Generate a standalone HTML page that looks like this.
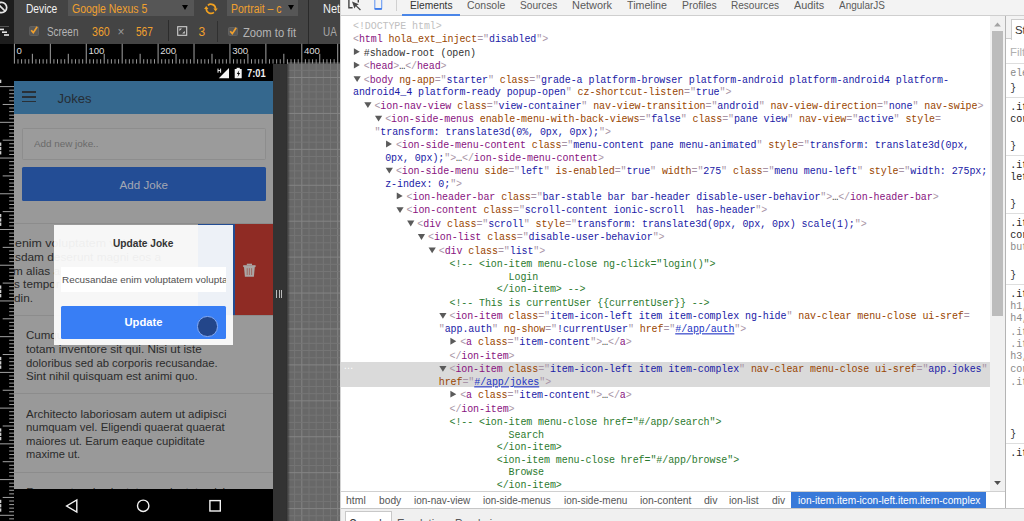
<!DOCTYPE html><html><head><meta charset="utf-8"><title>DevTools</title><style>
*{box-sizing:border-box;margin:0;padding:0}
html,body{width:1024px;height:521px;overflow:hidden;background:#fff}
body{position:relative;font-family:"Liberation Sans",sans-serif;}
.abs{position:absolute}
.t{position:absolute;white-space:pre;line-height:1}
/* left emulation panel */
#left{position:absolute;left:0;top:0;width:339.5px;height:521px;background:#000;overflow:hidden}
#tb{position:absolute;left:0;top:0;width:340px;height:43.5px;background:#444}
#tbl{position:absolute;left:0;top:0;width:14.3px;height:43.5px;background:#1d1d1d}
.sel{position:absolute;background:#565656}
.or{color:#f0a02e !important}
.tbt{position:absolute;white-space:pre;font-size:12px;line-height:14px;color:#dcdcdc}
/* device */
#dev{position:absolute;left:14.4px;top:63.6px;width:259px;height:458px;background:#999;overflow:hidden}
.dt{position:absolute;white-space:pre;font-size:11.5px;line-height:13.65px;color:#2b2b2b}
/* devtools */
#dt{position:absolute;left:339.5px;top:0;width:685px;height:521px;background:#fff;overflow:hidden}
.ln{position:absolute;white-space:pre;font-family:"Liberation Mono",monospace;font-size:10px;line-height:12px;height:12px;letter-spacing:-0.091px;color:#333;transform:scaleY(1.1);transform-origin:0 50%}
.tg{color:#881280}.an{color:#994500}.av{color:#1a1aa6}.p{color:#a894a6}.cm{color:#2b7a2e}.dc{color:#c0c0c0}
.ar{position:absolute;width:0;height:0}
.tab{position:absolute;white-space:pre;font-size:11.6px;line-height:14px;color:#5a5a5a}
.bc{position:absolute;white-space:pre;font-size:11.5px;line-height:14px;color:#555}
.st{position:absolute;white-space:pre;font-family:"Liberation Mono",monospace;font-size:10px;line-height:12px;left:1010.3px;letter-spacing:-0.091px;transform:scaleY(1.1);transform-origin:0 50%}
</style></head><body>
<div id="left">
<div class="abs" style="left:286px;top:63.6px;width:54px;height:458px;background:#686868"></div>
<svg class="abs" style="left:0;top:0" width="340" height="521"><line x1="287.43" y1="63.6" x2="287.43" y2="521" stroke="#757575" stroke-width="1"/><line x1="294.62" y1="63.6" x2="294.62" y2="521" stroke="#757575" stroke-width="1"/><line x1="301.80" y1="63.6" x2="301.80" y2="521" stroke="#848484" stroke-width="1"/><line x1="308.99" y1="63.6" x2="308.99" y2="521" stroke="#757575" stroke-width="1"/><line x1="316.17" y1="63.6" x2="316.17" y2="521" stroke="#757575" stroke-width="1"/><line x1="323.35" y1="63.6" x2="323.35" y2="521" stroke="#757575" stroke-width="1"/><line x1="330.54" y1="63.6" x2="330.54" y2="521" stroke="#757575" stroke-width="1"/><line x1="337.72" y1="63.6" x2="337.72" y2="521" stroke="#848484" stroke-width="1"/><line x1="287" y1="63.13" x2="340" y2="63.13" stroke="#757575" stroke-width="1"/><line x1="287" y1="70.31" x2="340" y2="70.31" stroke="#757575" stroke-width="1"/><line x1="287" y1="77.50" x2="340" y2="77.50" stroke="#848484" stroke-width="1"/><line x1="287" y1="84.69" x2="340" y2="84.69" stroke="#757575" stroke-width="1"/><line x1="287" y1="91.87" x2="340" y2="91.87" stroke="#757575" stroke-width="1"/><line x1="287" y1="99.06" x2="340" y2="99.06" stroke="#757575" stroke-width="1"/><line x1="287" y1="106.24" x2="340" y2="106.24" stroke="#757575" stroke-width="1"/><line x1="287" y1="113.43" x2="340" y2="113.43" stroke="#848484" stroke-width="1"/><line x1="287" y1="120.61" x2="340" y2="120.61" stroke="#757575" stroke-width="1"/><line x1="287" y1="127.80" x2="340" y2="127.80" stroke="#757575" stroke-width="1"/><line x1="287" y1="134.98" x2="340" y2="134.98" stroke="#757575" stroke-width="1"/><line x1="287" y1="142.16" x2="340" y2="142.16" stroke="#757575" stroke-width="1"/><line x1="287" y1="149.35" x2="340" y2="149.35" stroke="#848484" stroke-width="1"/><line x1="287" y1="156.53" x2="340" y2="156.53" stroke="#757575" stroke-width="1"/><line x1="287" y1="163.72" x2="340" y2="163.72" stroke="#757575" stroke-width="1"/><line x1="287" y1="170.91" x2="340" y2="170.91" stroke="#757575" stroke-width="1"/><line x1="287" y1="178.09" x2="340" y2="178.09" stroke="#757575" stroke-width="1"/><line x1="287" y1="185.28" x2="340" y2="185.28" stroke="#848484" stroke-width="1"/><line x1="287" y1="192.46" x2="340" y2="192.46" stroke="#757575" stroke-width="1"/><line x1="287" y1="199.65" x2="340" y2="199.65" stroke="#757575" stroke-width="1"/><line x1="287" y1="206.83" x2="340" y2="206.83" stroke="#757575" stroke-width="1"/><line x1="287" y1="214.02" x2="340" y2="214.02" stroke="#757575" stroke-width="1"/><line x1="287" y1="221.20" x2="340" y2="221.20" stroke="#848484" stroke-width="1"/><line x1="287" y1="228.38" x2="340" y2="228.38" stroke="#757575" stroke-width="1"/><line x1="287" y1="235.57" x2="340" y2="235.57" stroke="#757575" stroke-width="1"/><line x1="287" y1="242.75" x2="340" y2="242.75" stroke="#757575" stroke-width="1"/><line x1="287" y1="249.94" x2="340" y2="249.94" stroke="#757575" stroke-width="1"/><line x1="287" y1="257.12" x2="340" y2="257.12" stroke="#848484" stroke-width="1"/><line x1="287" y1="264.31" x2="340" y2="264.31" stroke="#757575" stroke-width="1"/><line x1="287" y1="271.50" x2="340" y2="271.50" stroke="#757575" stroke-width="1"/><line x1="287" y1="278.68" x2="340" y2="278.68" stroke="#757575" stroke-width="1"/><line x1="287" y1="285.87" x2="340" y2="285.87" stroke="#757575" stroke-width="1"/><line x1="287" y1="293.05" x2="340" y2="293.05" stroke="#848484" stroke-width="1"/><line x1="287" y1="300.24" x2="340" y2="300.24" stroke="#757575" stroke-width="1"/><line x1="287" y1="307.42" x2="340" y2="307.42" stroke="#757575" stroke-width="1"/><line x1="287" y1="314.61" x2="340" y2="314.61" stroke="#757575" stroke-width="1"/><line x1="287" y1="321.79" x2="340" y2="321.79" stroke="#757575" stroke-width="1"/><line x1="287" y1="328.98" x2="340" y2="328.98" stroke="#848484" stroke-width="1"/><line x1="287" y1="336.16" x2="340" y2="336.16" stroke="#757575" stroke-width="1"/><line x1="287" y1="343.35" x2="340" y2="343.35" stroke="#757575" stroke-width="1"/><line x1="287" y1="350.53" x2="340" y2="350.53" stroke="#757575" stroke-width="1"/><line x1="287" y1="357.72" x2="340" y2="357.72" stroke="#757575" stroke-width="1"/><line x1="287" y1="364.90" x2="340" y2="364.90" stroke="#848484" stroke-width="1"/><line x1="287" y1="372.08" x2="340" y2="372.08" stroke="#757575" stroke-width="1"/><line x1="287" y1="379.27" x2="340" y2="379.27" stroke="#757575" stroke-width="1"/><line x1="287" y1="386.45" x2="340" y2="386.45" stroke="#757575" stroke-width="1"/><line x1="287" y1="393.64" x2="340" y2="393.64" stroke="#757575" stroke-width="1"/><line x1="287" y1="400.82" x2="340" y2="400.82" stroke="#848484" stroke-width="1"/><line x1="287" y1="408.01" x2="340" y2="408.01" stroke="#757575" stroke-width="1"/><line x1="287" y1="415.19" x2="340" y2="415.19" stroke="#757575" stroke-width="1"/><line x1="287" y1="422.38" x2="340" y2="422.38" stroke="#757575" stroke-width="1"/><line x1="287" y1="429.56" x2="340" y2="429.56" stroke="#757575" stroke-width="1"/><line x1="287" y1="436.75" x2="340" y2="436.75" stroke="#848484" stroke-width="1"/><line x1="287" y1="443.94" x2="340" y2="443.94" stroke="#757575" stroke-width="1"/><line x1="287" y1="451.12" x2="340" y2="451.12" stroke="#757575" stroke-width="1"/><line x1="287" y1="458.31" x2="340" y2="458.31" stroke="#757575" stroke-width="1"/><line x1="287" y1="465.49" x2="340" y2="465.49" stroke="#757575" stroke-width="1"/><line x1="287" y1="472.68" x2="340" y2="472.68" stroke="#848484" stroke-width="1"/><line x1="287" y1="479.86" x2="340" y2="479.86" stroke="#757575" stroke-width="1"/><line x1="287" y1="487.05" x2="340" y2="487.05" stroke="#757575" stroke-width="1"/><line x1="287" y1="494.23" x2="340" y2="494.23" stroke="#757575" stroke-width="1"/><line x1="287" y1="501.42" x2="340" y2="501.42" stroke="#757575" stroke-width="1"/><line x1="287" y1="508.60" x2="340" y2="508.60" stroke="#848484" stroke-width="1"/><line x1="287" y1="515.79" x2="340" y2="515.79" stroke="#757575" stroke-width="1"/></svg>
<div class="abs" style="left:273px;top:63.6px;width:12.5px;height:458px;background:#333"></div>
<div class="abs" style="left:285.5px;top:63.6px;width:4.5px;height:458px;background:linear-gradient(to right,#2a2a2a 0,rgba(42,42,42,0.75) 30%,rgba(42,42,42,0) 100%)"></div>
<div class="abs" style="left:276.3px;top:289.5px;width:1.1px;height:8px;background:#bbb"></div>
<div class="abs" style="left:278.7px;top:289.5px;width:1.1px;height:8px;background:#bbb"></div>
<div class="abs" style="left:281.1px;top:289.5px;width:1.1px;height:8px;background:#bbb"></div>
<div id="tb"></div><div id="tbl"></div>
<svg class="abs" style="left:0;top:0" width="15" height="44"><circle cx="1.5" cy="7.5" r="5.2" fill="none" stroke="#e6e6e6" stroke-width="1.7"/><line x1="-2" y1="4" x2="5.5" y2="11.5" stroke="#e6e6e6" stroke-width="1.7"/><rect x="0" y="26" width="9" height="1" fill="#555"/><rect x="0" y="28.6" width="4" height="1.6" fill="#e6e6e6"/><rect x="2" y="31.4" width="5" height="1.6" fill="#e6e6e6"/><rect x="4" y="34.2" width="5" height="1.6" fill="#e6e6e6"/></svg>
<div class="tbt" style="left:26.4px;top:1.8px;transform-origin:0 0;transform:scaleX(0.8504);color:#f2f2f2;">Device</div>
<div class="sel" style="left:68px;top:0;width:126.3px;height:15.8px"></div>
<div class="tbt or" style="left:72.1px;top:1.8px;transform-origin:0 0;transform:scaleX(0.8749);">Google Nexus 5</div>
<div class="ar" style="left:181.8px;top:5.2px;border-left:3.3px solid transparent;border-right:3.3px solid transparent;border-top:5.5px solid #000"></div>
<svg class="abs" style="left:200px;top:0" width="22" height="18"><g transform="translate(-200,0)"><path d="M207.9 5.3 A4.6 4.6 0 0 1 215.5 8.8" fill="none" stroke="#f0a020" stroke-width="1.7"/><path d="M213.9 12.3 A4.6 4.6 0 0 1 206.3 8.8" fill="none" stroke="#f0a020" stroke-width="1.7"/><path d="M213.4 8.5 L217.7 8.5 L215.6 11.5 Z" fill="#f0a020"/><path d="M204.1 9.1 L208.4 9.1 L206.2 6.1 Z" fill="#f0a020"/></g></svg>
<div class="sel" style="left:226.8px;top:0;width:71px;height:15.8px"></div>
<div class="tbt or" style="left:231.4px;top:1.8px;transform-origin:0 0;transform:scaleX(0.8702);">Portrait – c</div>
<div class="ar" style="left:288.2px;top:5.2px;border-left:3.3px solid transparent;border-right:3.3px solid transparent;border-top:5.5px solid #000"></div>
<div class="abs" style="left:308px;top:0;width:1.2px;height:43.5px;background:#2a2a2a"></div>
<div class="tbt" style="left:322.8px;top:1.8px;transform-origin:0 0;transform:scaleX(0.9204);color:#f2f2f2;">Net</div>
<div class="tbt" style="left:322.8px;top:24.5px;transform-origin:0 0;transform:scaleX(0.8277);color:#a8a8a8;">UA</div>
<div class="abs" style="left:29px;top:26.3px;width:9.6px;height:9.6px;background:#585858;border:1px solid #606060;border-radius:1.5px"></div>
<svg class="abs" style="left:29px;top:25.3px" width="11" height="11"><path d="M2.2 5.2 L4.3 7.6 L8.2 1.8" fill="none" stroke="#f0a02e" stroke-width="1.7"/></svg>
<div class="tbt" style="left:46.7px;top:24.5px;transform-origin:0 0;transform:scaleX(0.8256);color:#b4b4b4;">Screen</div>
<div class="tbt or" style="left:91.5px;top:24.5px;transform-origin:0 0;transform:scaleX(0.8886);">360</div>
<div class="tbt" style="left:117.5px;top:24.5px;color:#999">×</div>
<div class="tbt or" style="left:136px;top:24.5px;transform-origin:0 0;transform:scaleX(0.8387);">567</div>
<div class="abs" style="left:167.8px;top:20px;width:1px;height:21px;background:#2c2c2c"></div>
<svg class="abs" style="left:177px;top:25.5px" width="11" height="11"><rect x="0.7" y="0.7" width="9" height="8.6" fill="none" stroke="#d0d0d0" stroke-width="1.1"/><path d="M2.4 2.4 L5 2.4 L2.4 5 Z M7.8 7.6 L5.2 7.6 L7.8 5 Z" fill="#d0d0d0"/></svg>
<div class="tbt or" style="left:198.6px;top:24.5px">3</div>
<div class="abs" style="left:216.8px;top:20.5px;width:1px;height:21px;background:#303030"></div>
<div class="abs" style="left:228px;top:26.8px;width:9.6px;height:9.6px;background:#585858;border:1px solid #606060;border-radius:1.5px"></div>
<svg class="abs" style="left:228px;top:25.8px" width="11" height="11"><path d="M2.2 5.2 L4.3 7.6 L8.2 1.8" fill="none" stroke="#f0a02e" stroke-width="1.7"/></svg>
<div class="tbt" style="left:243px;top:26px;transform-origin:0 0;transform:scaleX(0.9350);color:#b4b4b4;">Zoom to fit</div>
<svg class="abs" style="left:0;top:0" width="340" height="521" shape-rendering="auto"><line x1="14.40" y1="43.8" x2="14.40" y2="63.6" stroke="#b4b4b4" stroke-width="0.9"/><line x1="17.99" y1="59.2" x2="17.99" y2="63.6" stroke="#a8a8a8" stroke-width="0.9"/><line x1="21.59" y1="59.2" x2="21.59" y2="63.6" stroke="#a8a8a8" stroke-width="0.9"/><line x1="25.18" y1="59.2" x2="25.18" y2="63.6" stroke="#a8a8a8" stroke-width="0.9"/><line x1="28.77" y1="59.2" x2="28.77" y2="63.6" stroke="#a8a8a8" stroke-width="0.9"/><line x1="32.36" y1="53.8" x2="32.36" y2="63.6" stroke="#b4b4b4" stroke-width="0.9"/><line x1="35.95" y1="59.2" x2="35.95" y2="63.6" stroke="#a8a8a8" stroke-width="0.9"/><line x1="39.55" y1="59.2" x2="39.55" y2="63.6" stroke="#a8a8a8" stroke-width="0.9"/><line x1="43.14" y1="59.2" x2="43.14" y2="63.6" stroke="#a8a8a8" stroke-width="0.9"/><line x1="46.73" y1="59.2" x2="46.73" y2="63.6" stroke="#a8a8a8" stroke-width="0.9"/><line x1="50.33" y1="43.8" x2="50.33" y2="63.6" stroke="#b4b4b4" stroke-width="0.9"/><line x1="53.92" y1="59.2" x2="53.92" y2="63.6" stroke="#a8a8a8" stroke-width="0.9"/><line x1="57.51" y1="59.2" x2="57.51" y2="63.6" stroke="#a8a8a8" stroke-width="0.9"/><line x1="61.10" y1="59.2" x2="61.10" y2="63.6" stroke="#a8a8a8" stroke-width="0.9"/><line x1="64.70" y1="59.2" x2="64.70" y2="63.6" stroke="#a8a8a8" stroke-width="0.9"/><line x1="68.29" y1="53.8" x2="68.29" y2="63.6" stroke="#b4b4b4" stroke-width="0.9"/><line x1="71.88" y1="59.2" x2="71.88" y2="63.6" stroke="#a8a8a8" stroke-width="0.9"/><line x1="75.47" y1="59.2" x2="75.47" y2="63.6" stroke="#a8a8a8" stroke-width="0.9"/><line x1="79.07" y1="59.2" x2="79.07" y2="63.6" stroke="#a8a8a8" stroke-width="0.9"/><line x1="82.66" y1="59.2" x2="82.66" y2="63.6" stroke="#a8a8a8" stroke-width="0.9"/><line x1="86.25" y1="43.8" x2="86.25" y2="63.6" stroke="#b4b4b4" stroke-width="0.9"/><line x1="89.84" y1="59.2" x2="89.84" y2="63.6" stroke="#a8a8a8" stroke-width="0.9"/><line x1="93.44" y1="59.2" x2="93.44" y2="63.6" stroke="#a8a8a8" stroke-width="0.9"/><line x1="97.03" y1="59.2" x2="97.03" y2="63.6" stroke="#a8a8a8" stroke-width="0.9"/><line x1="100.62" y1="59.2" x2="100.62" y2="63.6" stroke="#a8a8a8" stroke-width="0.9"/><line x1="104.21" y1="53.8" x2="104.21" y2="63.6" stroke="#b4b4b4" stroke-width="0.9"/><line x1="107.81" y1="59.2" x2="107.81" y2="63.6" stroke="#a8a8a8" stroke-width="0.9"/><line x1="111.40" y1="59.2" x2="111.40" y2="63.6" stroke="#a8a8a8" stroke-width="0.9"/><line x1="114.99" y1="59.2" x2="114.99" y2="63.6" stroke="#a8a8a8" stroke-width="0.9"/><line x1="118.58" y1="59.2" x2="118.58" y2="63.6" stroke="#a8a8a8" stroke-width="0.9"/><line x1="122.18" y1="43.8" x2="122.18" y2="63.6" stroke="#b4b4b4" stroke-width="0.9"/><line x1="125.77" y1="59.2" x2="125.77" y2="63.6" stroke="#a8a8a8" stroke-width="0.9"/><line x1="129.36" y1="59.2" x2="129.36" y2="63.6" stroke="#a8a8a8" stroke-width="0.9"/><line x1="132.95" y1="59.2" x2="132.95" y2="63.6" stroke="#a8a8a8" stroke-width="0.9"/><line x1="136.55" y1="59.2" x2="136.55" y2="63.6" stroke="#a8a8a8" stroke-width="0.9"/><line x1="140.14" y1="53.8" x2="140.14" y2="63.6" stroke="#b4b4b4" stroke-width="0.9"/><line x1="143.73" y1="59.2" x2="143.73" y2="63.6" stroke="#a8a8a8" stroke-width="0.9"/><line x1="147.32" y1="59.2" x2="147.32" y2="63.6" stroke="#a8a8a8" stroke-width="0.9"/><line x1="150.92" y1="59.2" x2="150.92" y2="63.6" stroke="#a8a8a8" stroke-width="0.9"/><line x1="154.51" y1="59.2" x2="154.51" y2="63.6" stroke="#a8a8a8" stroke-width="0.9"/><line x1="158.10" y1="43.8" x2="158.10" y2="63.6" stroke="#b4b4b4" stroke-width="0.9"/><line x1="161.69" y1="59.2" x2="161.69" y2="63.6" stroke="#a8a8a8" stroke-width="0.9"/><line x1="165.29" y1="59.2" x2="165.29" y2="63.6" stroke="#a8a8a8" stroke-width="0.9"/><line x1="168.88" y1="59.2" x2="168.88" y2="63.6" stroke="#a8a8a8" stroke-width="0.9"/><line x1="172.47" y1="59.2" x2="172.47" y2="63.6" stroke="#a8a8a8" stroke-width="0.9"/><line x1="176.06" y1="53.8" x2="176.06" y2="63.6" stroke="#b4b4b4" stroke-width="0.9"/><line x1="179.66" y1="59.2" x2="179.66" y2="63.6" stroke="#a8a8a8" stroke-width="0.9"/><line x1="183.25" y1="59.2" x2="183.25" y2="63.6" stroke="#a8a8a8" stroke-width="0.9"/><line x1="186.84" y1="59.2" x2="186.84" y2="63.6" stroke="#a8a8a8" stroke-width="0.9"/><line x1="190.43" y1="59.2" x2="190.43" y2="63.6" stroke="#a8a8a8" stroke-width="0.9"/><line x1="194.03" y1="43.8" x2="194.03" y2="63.6" stroke="#b4b4b4" stroke-width="0.9"/><line x1="197.62" y1="59.2" x2="197.62" y2="63.6" stroke="#a8a8a8" stroke-width="0.9"/><line x1="201.21" y1="59.2" x2="201.21" y2="63.6" stroke="#a8a8a8" stroke-width="0.9"/><line x1="204.80" y1="59.2" x2="204.80" y2="63.6" stroke="#a8a8a8" stroke-width="0.9"/><line x1="208.40" y1="59.2" x2="208.40" y2="63.6" stroke="#a8a8a8" stroke-width="0.9"/><line x1="211.99" y1="53.8" x2="211.99" y2="63.6" stroke="#b4b4b4" stroke-width="0.9"/><line x1="215.58" y1="59.2" x2="215.58" y2="63.6" stroke="#a8a8a8" stroke-width="0.9"/><line x1="219.17" y1="59.2" x2="219.17" y2="63.6" stroke="#a8a8a8" stroke-width="0.9"/><line x1="222.77" y1="59.2" x2="222.77" y2="63.6" stroke="#a8a8a8" stroke-width="0.9"/><line x1="226.36" y1="59.2" x2="226.36" y2="63.6" stroke="#a8a8a8" stroke-width="0.9"/><line x1="229.95" y1="43.8" x2="229.95" y2="63.6" stroke="#b4b4b4" stroke-width="0.9"/><line x1="233.54" y1="59.2" x2="233.54" y2="63.6" stroke="#a8a8a8" stroke-width="0.9"/><line x1="237.14" y1="59.2" x2="237.14" y2="63.6" stroke="#a8a8a8" stroke-width="0.9"/><line x1="240.73" y1="59.2" x2="240.73" y2="63.6" stroke="#a8a8a8" stroke-width="0.9"/><line x1="244.32" y1="59.2" x2="244.32" y2="63.6" stroke="#a8a8a8" stroke-width="0.9"/><line x1="247.91" y1="53.8" x2="247.91" y2="63.6" stroke="#b4b4b4" stroke-width="0.9"/><line x1="251.51" y1="59.2" x2="251.51" y2="63.6" stroke="#a8a8a8" stroke-width="0.9"/><line x1="255.10" y1="59.2" x2="255.10" y2="63.6" stroke="#a8a8a8" stroke-width="0.9"/><line x1="258.69" y1="59.2" x2="258.69" y2="63.6" stroke="#a8a8a8" stroke-width="0.9"/><line x1="262.28" y1="59.2" x2="262.28" y2="63.6" stroke="#a8a8a8" stroke-width="0.9"/><line x1="265.88" y1="43.8" x2="265.88" y2="63.6" stroke="#b4b4b4" stroke-width="0.9"/><line x1="269.47" y1="59.2" x2="269.47" y2="63.6" stroke="#a8a8a8" stroke-width="0.9"/><line x1="273.06" y1="59.2" x2="273.06" y2="63.6" stroke="#a8a8a8" stroke-width="0.9"/><line x1="276.65" y1="59.2" x2="276.65" y2="63.6" stroke="#a8a8a8" stroke-width="0.9"/><line x1="280.25" y1="59.2" x2="280.25" y2="63.6" stroke="#a8a8a8" stroke-width="0.9"/><line x1="283.84" y1="53.8" x2="283.84" y2="63.6" stroke="#b4b4b4" stroke-width="0.9"/><line x1="287.43" y1="59.2" x2="287.43" y2="63.6" stroke="#a8a8a8" stroke-width="0.9"/><line x1="291.02" y1="59.2" x2="291.02" y2="63.6" stroke="#a8a8a8" stroke-width="0.9"/><line x1="294.62" y1="59.2" x2="294.62" y2="63.6" stroke="#a8a8a8" stroke-width="0.9"/><line x1="298.21" y1="59.2" x2="298.21" y2="63.6" stroke="#a8a8a8" stroke-width="0.9"/><line x1="301.80" y1="43.8" x2="301.80" y2="63.6" stroke="#b4b4b4" stroke-width="0.9"/><line x1="305.39" y1="59.2" x2="305.39" y2="63.6" stroke="#a8a8a8" stroke-width="0.9"/><line x1="308.99" y1="59.2" x2="308.99" y2="63.6" stroke="#a8a8a8" stroke-width="0.9"/><line x1="312.58" y1="59.2" x2="312.58" y2="63.6" stroke="#a8a8a8" stroke-width="0.9"/><line x1="316.17" y1="59.2" x2="316.17" y2="63.6" stroke="#a8a8a8" stroke-width="0.9"/><line x1="319.76" y1="53.8" x2="319.76" y2="63.6" stroke="#b4b4b4" stroke-width="0.9"/><line x1="323.35" y1="59.2" x2="323.35" y2="63.6" stroke="#a8a8a8" stroke-width="0.9"/><line x1="326.95" y1="59.2" x2="326.95" y2="63.6" stroke="#a8a8a8" stroke-width="0.9"/><line x1="330.54" y1="59.2" x2="330.54" y2="63.6" stroke="#a8a8a8" stroke-width="0.9"/><line x1="334.13" y1="59.2" x2="334.13" y2="63.6" stroke="#a8a8a8" stroke-width="0.9"/><line x1="337.72" y1="43.8" x2="337.72" y2="63.6" stroke="#b4b4b4" stroke-width="0.9"/><line x1="0" y1="86.60" x2="14.3" y2="86.60" stroke="#b4b4b4" stroke-width="0.9"/><line x1="9.2" y1="90.17" x2="14.3" y2="90.17" stroke="#b4b4b4" stroke-width="0.9"/><line x1="9.2" y1="93.74" x2="14.3" y2="93.74" stroke="#b4b4b4" stroke-width="0.9"/><line x1="9.2" y1="97.32" x2="14.3" y2="97.32" stroke="#b4b4b4" stroke-width="0.9"/><line x1="9.2" y1="100.89" x2="14.3" y2="100.89" stroke="#b4b4b4" stroke-width="0.9"/><line x1="2.7" y1="104.46" x2="14.3" y2="104.46" stroke="#b4b4b4" stroke-width="0.9"/><line x1="9.2" y1="108.03" x2="14.3" y2="108.03" stroke="#b4b4b4" stroke-width="0.9"/><line x1="9.2" y1="111.61" x2="14.3" y2="111.61" stroke="#b4b4b4" stroke-width="0.9"/><line x1="9.2" y1="115.18" x2="14.3" y2="115.18" stroke="#b4b4b4" stroke-width="0.9"/><line x1="9.2" y1="118.75" x2="14.3" y2="118.75" stroke="#b4b4b4" stroke-width="0.9"/><line x1="0" y1="122.32" x2="14.3" y2="122.32" stroke="#b4b4b4" stroke-width="0.9"/><line x1="9.2" y1="125.90" x2="14.3" y2="125.90" stroke="#b4b4b4" stroke-width="0.9"/><line x1="9.2" y1="129.47" x2="14.3" y2="129.47" stroke="#b4b4b4" stroke-width="0.9"/><line x1="9.2" y1="133.04" x2="14.3" y2="133.04" stroke="#b4b4b4" stroke-width="0.9"/><line x1="9.2" y1="136.62" x2="14.3" y2="136.62" stroke="#b4b4b4" stroke-width="0.9"/><line x1="2.7" y1="140.19" x2="14.3" y2="140.19" stroke="#b4b4b4" stroke-width="0.9"/><line x1="9.2" y1="143.76" x2="14.3" y2="143.76" stroke="#b4b4b4" stroke-width="0.9"/><line x1="9.2" y1="147.33" x2="14.3" y2="147.33" stroke="#b4b4b4" stroke-width="0.9"/><line x1="9.2" y1="150.91" x2="14.3" y2="150.91" stroke="#b4b4b4" stroke-width="0.9"/><line x1="9.2" y1="154.48" x2="14.3" y2="154.48" stroke="#b4b4b4" stroke-width="0.9"/><line x1="0" y1="158.05" x2="14.3" y2="158.05" stroke="#b4b4b4" stroke-width="0.9"/><line x1="9.2" y1="161.62" x2="14.3" y2="161.62" stroke="#b4b4b4" stroke-width="0.9"/><line x1="9.2" y1="165.19" x2="14.3" y2="165.19" stroke="#b4b4b4" stroke-width="0.9"/><line x1="9.2" y1="168.77" x2="14.3" y2="168.77" stroke="#b4b4b4" stroke-width="0.9"/><line x1="9.2" y1="172.34" x2="14.3" y2="172.34" stroke="#b4b4b4" stroke-width="0.9"/><line x1="2.7" y1="175.91" x2="14.3" y2="175.91" stroke="#b4b4b4" stroke-width="0.9"/><line x1="9.2" y1="179.49" x2="14.3" y2="179.49" stroke="#b4b4b4" stroke-width="0.9"/><line x1="9.2" y1="183.06" x2="14.3" y2="183.06" stroke="#b4b4b4" stroke-width="0.9"/><line x1="9.2" y1="186.63" x2="14.3" y2="186.63" stroke="#b4b4b4" stroke-width="0.9"/><line x1="9.2" y1="190.20" x2="14.3" y2="190.20" stroke="#b4b4b4" stroke-width="0.9"/><line x1="0" y1="193.77" x2="14.3" y2="193.77" stroke="#b4b4b4" stroke-width="0.9"/><line x1="9.2" y1="197.35" x2="14.3" y2="197.35" stroke="#b4b4b4" stroke-width="0.9"/><line x1="9.2" y1="200.92" x2="14.3" y2="200.92" stroke="#b4b4b4" stroke-width="0.9"/><line x1="9.2" y1="204.49" x2="14.3" y2="204.49" stroke="#b4b4b4" stroke-width="0.9"/><line x1="9.2" y1="208.06" x2="14.3" y2="208.06" stroke="#b4b4b4" stroke-width="0.9"/><line x1="2.7" y1="211.64" x2="14.3" y2="211.64" stroke="#b4b4b4" stroke-width="0.9"/><line x1="9.2" y1="215.21" x2="14.3" y2="215.21" stroke="#b4b4b4" stroke-width="0.9"/><line x1="9.2" y1="218.78" x2="14.3" y2="218.78" stroke="#b4b4b4" stroke-width="0.9"/><line x1="9.2" y1="222.35" x2="14.3" y2="222.35" stroke="#b4b4b4" stroke-width="0.9"/><line x1="9.2" y1="225.93" x2="14.3" y2="225.93" stroke="#b4b4b4" stroke-width="0.9"/><line x1="0" y1="229.50" x2="14.3" y2="229.50" stroke="#b4b4b4" stroke-width="0.9"/><line x1="9.2" y1="233.07" x2="14.3" y2="233.07" stroke="#b4b4b4" stroke-width="0.9"/><line x1="9.2" y1="236.65" x2="14.3" y2="236.65" stroke="#b4b4b4" stroke-width="0.9"/><line x1="9.2" y1="240.22" x2="14.3" y2="240.22" stroke="#b4b4b4" stroke-width="0.9"/><line x1="9.2" y1="243.79" x2="14.3" y2="243.79" stroke="#b4b4b4" stroke-width="0.9"/><line x1="2.7" y1="247.36" x2="14.3" y2="247.36" stroke="#b4b4b4" stroke-width="0.9"/><line x1="9.2" y1="250.94" x2="14.3" y2="250.94" stroke="#b4b4b4" stroke-width="0.9"/><line x1="9.2" y1="254.51" x2="14.3" y2="254.51" stroke="#b4b4b4" stroke-width="0.9"/><line x1="9.2" y1="258.08" x2="14.3" y2="258.08" stroke="#b4b4b4" stroke-width="0.9"/><line x1="9.2" y1="261.65" x2="14.3" y2="261.65" stroke="#b4b4b4" stroke-width="0.9"/><line x1="0" y1="265.23" x2="14.3" y2="265.23" stroke="#b4b4b4" stroke-width="0.9"/><line x1="9.2" y1="268.80" x2="14.3" y2="268.80" stroke="#b4b4b4" stroke-width="0.9"/><line x1="9.2" y1="272.37" x2="14.3" y2="272.37" stroke="#b4b4b4" stroke-width="0.9"/><line x1="9.2" y1="275.94" x2="14.3" y2="275.94" stroke="#b4b4b4" stroke-width="0.9"/><line x1="9.2" y1="279.51" x2="14.3" y2="279.51" stroke="#b4b4b4" stroke-width="0.9"/><line x1="2.7" y1="283.09" x2="14.3" y2="283.09" stroke="#b4b4b4" stroke-width="0.9"/><line x1="9.2" y1="286.66" x2="14.3" y2="286.66" stroke="#b4b4b4" stroke-width="0.9"/><line x1="9.2" y1="290.23" x2="14.3" y2="290.23" stroke="#b4b4b4" stroke-width="0.9"/><line x1="9.2" y1="293.81" x2="14.3" y2="293.81" stroke="#b4b4b4" stroke-width="0.9"/><line x1="9.2" y1="297.38" x2="14.3" y2="297.38" stroke="#b4b4b4" stroke-width="0.9"/><line x1="0" y1="300.95" x2="14.3" y2="300.95" stroke="#b4b4b4" stroke-width="0.9"/><line x1="9.2" y1="304.52" x2="14.3" y2="304.52" stroke="#b4b4b4" stroke-width="0.9"/><line x1="9.2" y1="308.10" x2="14.3" y2="308.10" stroke="#b4b4b4" stroke-width="0.9"/><line x1="9.2" y1="311.67" x2="14.3" y2="311.67" stroke="#b4b4b4" stroke-width="0.9"/><line x1="9.2" y1="315.24" x2="14.3" y2="315.24" stroke="#b4b4b4" stroke-width="0.9"/><line x1="2.7" y1="318.81" x2="14.3" y2="318.81" stroke="#b4b4b4" stroke-width="0.9"/><line x1="9.2" y1="322.38" x2="14.3" y2="322.38" stroke="#b4b4b4" stroke-width="0.9"/><line x1="9.2" y1="325.96" x2="14.3" y2="325.96" stroke="#b4b4b4" stroke-width="0.9"/><line x1="9.2" y1="329.53" x2="14.3" y2="329.53" stroke="#b4b4b4" stroke-width="0.9"/><line x1="9.2" y1="333.10" x2="14.3" y2="333.10" stroke="#b4b4b4" stroke-width="0.9"/><line x1="0" y1="336.68" x2="14.3" y2="336.68" stroke="#b4b4b4" stroke-width="0.9"/><line x1="9.2" y1="340.25" x2="14.3" y2="340.25" stroke="#b4b4b4" stroke-width="0.9"/><line x1="9.2" y1="343.82" x2="14.3" y2="343.82" stroke="#b4b4b4" stroke-width="0.9"/><line x1="9.2" y1="347.39" x2="14.3" y2="347.39" stroke="#b4b4b4" stroke-width="0.9"/><line x1="9.2" y1="350.97" x2="14.3" y2="350.97" stroke="#b4b4b4" stroke-width="0.9"/><line x1="2.7" y1="354.54" x2="14.3" y2="354.54" stroke="#b4b4b4" stroke-width="0.9"/><line x1="9.2" y1="358.11" x2="14.3" y2="358.11" stroke="#b4b4b4" stroke-width="0.9"/><line x1="9.2" y1="361.68" x2="14.3" y2="361.68" stroke="#b4b4b4" stroke-width="0.9"/><line x1="9.2" y1="365.25" x2="14.3" y2="365.25" stroke="#b4b4b4" stroke-width="0.9"/><line x1="9.2" y1="368.83" x2="14.3" y2="368.83" stroke="#b4b4b4" stroke-width="0.9"/><line x1="0" y1="372.40" x2="14.3" y2="372.40" stroke="#b4b4b4" stroke-width="0.9"/><line x1="9.2" y1="375.97" x2="14.3" y2="375.97" stroke="#b4b4b4" stroke-width="0.9"/><line x1="9.2" y1="379.54" x2="14.3" y2="379.54" stroke="#b4b4b4" stroke-width="0.9"/><line x1="9.2" y1="383.12" x2="14.3" y2="383.12" stroke="#b4b4b4" stroke-width="0.9"/><line x1="9.2" y1="386.69" x2="14.3" y2="386.69" stroke="#b4b4b4" stroke-width="0.9"/><line x1="2.7" y1="390.26" x2="14.3" y2="390.26" stroke="#b4b4b4" stroke-width="0.9"/><line x1="9.2" y1="393.84" x2="14.3" y2="393.84" stroke="#b4b4b4" stroke-width="0.9"/><line x1="9.2" y1="397.41" x2="14.3" y2="397.41" stroke="#b4b4b4" stroke-width="0.9"/><line x1="9.2" y1="400.98" x2="14.3" y2="400.98" stroke="#b4b4b4" stroke-width="0.9"/><line x1="9.2" y1="404.55" x2="14.3" y2="404.55" stroke="#b4b4b4" stroke-width="0.9"/><line x1="0" y1="408.12" x2="14.3" y2="408.12" stroke="#b4b4b4" stroke-width="0.9"/><line x1="9.2" y1="411.70" x2="14.3" y2="411.70" stroke="#b4b4b4" stroke-width="0.9"/><line x1="9.2" y1="415.27" x2="14.3" y2="415.27" stroke="#b4b4b4" stroke-width="0.9"/><line x1="9.2" y1="418.84" x2="14.3" y2="418.84" stroke="#b4b4b4" stroke-width="0.9"/><line x1="9.2" y1="422.41" x2="14.3" y2="422.41" stroke="#b4b4b4" stroke-width="0.9"/><line x1="2.7" y1="425.99" x2="14.3" y2="425.99" stroke="#b4b4b4" stroke-width="0.9"/><line x1="9.2" y1="429.56" x2="14.3" y2="429.56" stroke="#b4b4b4" stroke-width="0.9"/><line x1="9.2" y1="433.13" x2="14.3" y2="433.13" stroke="#b4b4b4" stroke-width="0.9"/><line x1="9.2" y1="436.71" x2="14.3" y2="436.71" stroke="#b4b4b4" stroke-width="0.9"/><line x1="9.2" y1="440.28" x2="14.3" y2="440.28" stroke="#b4b4b4" stroke-width="0.9"/><line x1="0" y1="443.85" x2="14.3" y2="443.85" stroke="#b4b4b4" stroke-width="0.9"/><line x1="9.2" y1="447.42" x2="14.3" y2="447.42" stroke="#b4b4b4" stroke-width="0.9"/><line x1="9.2" y1="451.00" x2="14.3" y2="451.00" stroke="#b4b4b4" stroke-width="0.9"/><line x1="9.2" y1="454.57" x2="14.3" y2="454.57" stroke="#b4b4b4" stroke-width="0.9"/><line x1="9.2" y1="458.14" x2="14.3" y2="458.14" stroke="#b4b4b4" stroke-width="0.9"/><line x1="2.7" y1="461.71" x2="14.3" y2="461.71" stroke="#b4b4b4" stroke-width="0.9"/><line x1="9.2" y1="465.28" x2="14.3" y2="465.28" stroke="#b4b4b4" stroke-width="0.9"/><line x1="9.2" y1="468.86" x2="14.3" y2="468.86" stroke="#b4b4b4" stroke-width="0.9"/><line x1="9.2" y1="472.43" x2="14.3" y2="472.43" stroke="#b4b4b4" stroke-width="0.9"/><line x1="9.2" y1="476.00" x2="14.3" y2="476.00" stroke="#b4b4b4" stroke-width="0.9"/><line x1="0" y1="479.58" x2="14.3" y2="479.58" stroke="#b4b4b4" stroke-width="0.9"/><line x1="9.2" y1="483.15" x2="14.3" y2="483.15" stroke="#b4b4b4" stroke-width="0.9"/><line x1="9.2" y1="486.72" x2="14.3" y2="486.72" stroke="#b4b4b4" stroke-width="0.9"/><line x1="9.2" y1="490.29" x2="14.3" y2="490.29" stroke="#b4b4b4" stroke-width="0.9"/><line x1="9.2" y1="493.87" x2="14.3" y2="493.87" stroke="#b4b4b4" stroke-width="0.9"/><line x1="2.7" y1="497.44" x2="14.3" y2="497.44" stroke="#b4b4b4" stroke-width="0.9"/><line x1="9.2" y1="501.01" x2="14.3" y2="501.01" stroke="#b4b4b4" stroke-width="0.9"/><line x1="9.2" y1="504.58" x2="14.3" y2="504.58" stroke="#b4b4b4" stroke-width="0.9"/><line x1="9.2" y1="508.15" x2="14.3" y2="508.15" stroke="#b4b4b4" stroke-width="0.9"/><line x1="9.2" y1="511.73" x2="14.3" y2="511.73" stroke="#b4b4b4" stroke-width="0.9"/><line x1="0" y1="515.30" x2="14.3" y2="515.30" stroke="#b4b4b4" stroke-width="0.9"/><line x1="9.2" y1="518.87" x2="14.3" y2="518.87" stroke="#b4b4b4" stroke-width="0.9"/></svg>
<div class="t" style="left:16.6px;top:45.6px;font-size:9.6px;color:#dedede;letter-spacing:-0.1px">0</div>
<div class="t" style="left:88.5px;top:45.6px;font-size:9.6px;color:#dedede;letter-spacing:-0.1px">100</div>
<div class="t" style="left:160.3px;top:45.6px;font-size:9.6px;color:#dedede;letter-spacing:-0.1px">200</div>
<div class="t" style="left:232.2px;top:45.6px;font-size:9.6px;color:#dedede;letter-spacing:-0.1px">300</div>
<div class="t" style="left:304.0px;top:45.6px;font-size:9.6px;color:#dedede;letter-spacing:-0.1px">400</div>
<svg class="abs" style="left:0;top:0" width="3" height="521" fill="#cfcfcf"><rect x="0" y="79.70" width="1.3" height="3.3"/><rect x="0" y="151.15" width="1.3" height="3.3"/><rect x="0" y="146.85" width="1.3" height="3.3"/><rect x="0" y="142.55" width="1.3" height="3.3"/><rect x="0" y="222.60" width="1.3" height="3.3"/><rect x="0" y="218.30" width="1.3" height="3.3"/><rect x="0" y="214.00" width="1.3" height="3.3"/><rect x="0" y="294.05" width="1.3" height="3.3"/><rect x="0" y="289.75" width="1.3" height="3.3"/><rect x="0" y="285.45" width="1.3" height="3.3"/><rect x="0" y="365.50" width="1.3" height="3.3"/><rect x="0" y="361.20" width="1.3" height="3.3"/><rect x="0" y="356.90" width="1.3" height="3.3"/><rect x="0" y="436.95" width="1.3" height="3.3"/><rect x="0" y="432.65" width="1.3" height="3.3"/><rect x="0" y="428.35" width="1.3" height="3.3"/><rect x="0" y="508.40" width="1.3" height="3.3"/><rect x="0" y="504.10" width="1.3" height="3.3"/><rect x="0" y="499.80" width="1.3" height="3.3"/></svg>
<div id="dev">
<div class="abs" style="left:0;top:0;width:259px;height:17.9px;background:#000"></div>
<div class="t" style="left:233.0px;top:4.7px;transform-origin:0 0;transform:scaleX(0.8443);font-size:11px;font-weight:bold;color:#f0f0f0;">7:01</div>
<svg class="abs" style="left:0;top:0" width="259" height="18"><g transform="translate(-14.4,-63.6)" fill="#f4f4f4"><path d="M229.4 67.7 L229.4 77.9 L219.2 77.9 Z"/><path d="M218.4 68.2v4.1M221 68.2v4.1M218.4 70.2h2.6" stroke="#f4f4f4" stroke-width="1" fill="none"/><rect x="235.1" y="68.6" width="7" height="9.3" rx="0.6"/><rect x="237" y="67.4" width="3.2" height="1.6"/><path d="M239.7 69.8 L237.2 73.6 L238.7 73.6 L238 76.6 L240.5 72.5 L239 72.5 Z" fill="#000"/></g></svg>
<div class="abs" style="left:0;top:17.9px;width:259px;height:32.2px;background:#35688e"></div>
<div class="abs" style="left:7.3px;top:27.80px;width:14.2px;height:1.7px;background:#293037"></div>
<div class="abs" style="left:7.3px;top:32.50px;width:14.2px;height:1.7px;background:#293037"></div>
<div class="abs" style="left:7.3px;top:37.10px;width:14.2px;height:1.7px;background:#293037"></div>
<div class="t" style="left:43.2px;top:28.0px;font-size:13px;color:#252d35">Jokes</div>
<div class="abs" style="left:7.3px;top:64.0px;width:244.1px;height:32.0px;border:1px solid #8d8d8d;border-radius:1.5px;background:#9b9b9b"></div>
<div class="t" style="left:19.8px;top:75.4px;transform-origin:0 0;transform:scaleX(1.0264);font-size:9.6px;color:#6a6a6a;">Add new joke..</div>
<div class="abs" style="left:7.3px;top:103.8px;width:244.1px;height:34.1px;background:#234d95;border-radius:1.5px"></div>
<div class="t" style="left:7.3px;width:244.1px;text-align:center;top:115.6px;font-size:11.6px;color:#a3a8b3">Add Joke</div>
<div class="abs" style="left:0;top:159.4px;width:259px;height:1px;background:#8c8c8c"></div>
<div class="abs" style="left:0;top:251.7px;width:259px;height:1px;background:#8c8c8c"></div>
<div class="abs" style="left:0;top:329.2px;width:259px;height:1px;background:#8c8c8c"></div>
<div class="abs" style="left:0;top:408.9px;width:259px;height:1px;background:#8c8c8c"></div>
<div class="dt" style="left:0.5px;top:173.8px;transform-origin:0 0;transform:scaleX(1.08);">enim voluptatem voluptas</div>
<div class="dt" style="left:0.3px;top:187.6px;transform-origin:0 0;transform:scaleX(1.03);">sdam deserunt magni eos a</div>
<div class="dt" style="left:-1.0px;top:201.2px;transform-origin:0 0;transform:scaleX(1.02);">m alias ad</div>
<div class="dt" style="left:-0.5px;top:214.9px;transform-origin:0 0;transform:scaleX(1.02);">s tempor</div>
<div class="dt" style="left:-0.4px;top:228.4px;transform-origin:0 0;transform:scaleX(1.02);">din.</div>
<div class="dt" style="left:11.9px;top:265.6px;transform-origin:0 0;transform:scaleX(1.0007);">Cumque</div>
<div class="dt" style="left:11.9px;top:279.6px;transform-origin:0 0;transform:scaleX(1.0219);">totam inventore sit qui. Nisi ut iste</div>
<div class="dt" style="left:11.9px;top:293.2px;transform-origin:0 0;transform:scaleX(0.9832);">doloribus sed ab corporis recusandae.</div>
<div class="dt" style="left:11.9px;top:306.8px;transform-origin:0 0;transform:scaleX(1.0022);">Sint nihil quisquam est animi quo.</div>
<div class="dt" style="left:11.9px;top:344.2px;transform-origin:0 0;transform:scaleX(1.0021);">Architecto laboriosam autem ut adipisci</div>
<div class="dt" style="left:11.9px;top:357.8px;transform-origin:0 0;transform:scaleX(0.9898);">numquam vel. Eligendi quaerat quaerat</div>
<div class="dt" style="left:11.9px;top:371.0px;transform-origin:0 0;transform:scaleX(0.9843);">maiores ut. Earum eaque cupiditate</div>
<div class="dt" style="left:11.9px;top:384.5px;transform-origin:0 0;transform:scaleX(0.9636);">maxime ut.</div>
<div class="dt" style="left:11.9px;top:422.8px">Rerum et sed voluptatem voluptate nisi</div>
<div class="abs" style="left:183.5px;top:160.4px;width:37.8px;height:91.3px;background:#224c93"></div>
<div class="abs" style="left:221.1px;top:160.4px;width:38.0px;height:91.3px;background:#8f2b24"></div>
<svg class="abs" style="left:0;top:0" width="259" height="458"><g transform="translate(-14.4,-63.6)" fill="#aaa6a5"><path d="M244.4 266.6 L255.2 266.6 L254.3 276.3 L245.3 276.3 Z"/><rect x="243.6" y="264.8" width="12.4" height="1.9"/><rect x="247.2" y="263.3" width="5.2" height="1.5"/><path d="M247.6 267.8v6.8M249.8 267.8v6.8M252 267.8v6.8" stroke="#9a5a52" stroke-width="0.8" fill="none"/></g></svg>
<div class="abs" style="left:39.4px;top:161.6px;width:179.3px;height:119.6px;background:rgba(255,255,255,0.92);border-radius:0"></div>
<div class="t" style="left:98.9px;top:174.2px;transform-origin:0 0;transform:scaleX(0.9408);font-size:10.8px;font-weight:bold;color:#333;">Update Joke</div>
<div class="abs" style="left:46.2px;top:203.8px;width:165.4px;height:24.2px;background:#fff"></div>
<div class="abs" style="left:46.2px;top:203.8px;width:165.4px;height:24.2px;overflow:hidden"><div class="t" style="left:1.4px;top:7.8px;font-size:9.9px;color:#505050;transform-origin:0 0;transform:scaleX(1.0016);">Recusandae enim voluptatem volupta</div></div>
<div class="abs" style="left:46.6px;top:242.8px;width:165.0px;height:32.3px;background:#387ef5;border-radius:1.5px"></div>
<div class="t" style="left:46.6px;width:165px;text-align:center;top:253.5px;font-size:11.2px;font-weight:bold;color:#fff">Update</div>
<div class="abs" style="left:183.0px;top:252.9px;width:20.4px;height:20.4px;border-radius:50%;background:#23468a;border:1.7px solid #84a9f2"></div>
<div class="abs" style="left:0;top:425.3px;width:259px;height:40px;background:#000"></div>
<svg class="abs" style="left:0;top:425.3px" width="259" height="33"><path d="M62.8 10.9 L62.8 23.1 L52.6 17.0 Z" fill="none" stroke="#f2f2f2" stroke-width="1.4" stroke-linejoin="miter"/><circle cx="129.2" cy="16.8" r="5.7" fill="none" stroke="#f2f2f2" stroke-width="1.4"/><rect x="195.9" y="11.6" width="10.4" height="10.4" fill="none" stroke="#f2f2f2" stroke-width="1.4"/></svg>
</div>
</div>
<div class="abs" style="left:339.5px;top:0;width:684.5px;height:521px;background:#fff"></div>
<div class="abs" style="left:339.5px;top:0;width:684.5px;height:15.7px;background:#f3f3f3;border-bottom:1px solid #cfcfcf"></div>
<div class="abs" style="left:339.6px;top:0;width:0.8px;height:521px;background:#d4d4d4"></div>
<svg class="abs" style="left:340px;top:0" width="60" height="14"><path d="M8.9 -1 L8.9 7.8 L12.6 7.8" fill="none" stroke="#444" stroke-width="1.4"/><path d="M18.3 -1 L18.3 2.6" fill="none" stroke="#444" stroke-width="1.4"/><path d="M12 1.6 L18.8 4.2 L16.6 5.5 L20.9 9.6 L20 10.4 L15.8 6.3 L14.4 8.6 Z" fill="#444"/><rect x="34.8" y="-3" width="6.9" height="12.3" rx="1.2" fill="none" stroke="#6a9bf2" stroke-width="1.1"/><rect x="34.4" y="7.9" width="7.7" height="1.9" rx="0.8" fill="#3f7be8"/></svg>
<div class="abs" style="left:395.8px;top:0;width:1px;height:11.3px;background:#d0d0d0"></div>
<div class="tab" style="left:409.5px;top:-2.3px;transform-origin:0 0;transform:scaleX(0.8794);color:#333;">Elements</div>
<div class="tab" style="left:466.7px;top:-2.3px;transform-origin:0 0;transform:scaleX(0.9002);color:#5a5a5a;">Console</div>
<div class="tab" style="left:519.6px;top:-2.3px;transform-origin:0 0;transform:scaleX(0.8747);color:#5a5a5a;">Sources</div>
<div class="tab" style="left:571.7px;top:-2.3px;transform-origin:0 0;transform:scaleX(0.9428);color:#5a5a5a;">Network</div>
<div class="tab" style="left:627px;top:-2.3px;transform-origin:0 0;transform:scaleX(0.9219);color:#5a5a5a;">Timeline</div>
<div class="tab" style="left:681.8px;top:-2.3px;transform-origin:0 0;transform:scaleX(0.8973);color:#5a5a5a;">Profiles</div>
<div class="tab" style="left:731px;top:-2.3px;transform-origin:0 0;transform:scaleX(0.8661);color:#5a5a5a;">Resources</div>
<div class="tab" style="left:793.8px;top:-2.3px;transform-origin:0 0;transform:scaleX(0.9369);color:#5a5a5a;">Audits</div>
<div class="tab" style="left:839.4px;top:-2.3px;transform-origin:0 0;transform:scaleX(0.8598);color:#5a5a5a;">AngularJS</div>
<div class="abs" style="left:402px;top:14.2px;width:58px;height:1.8px;background:#4a86e8"></div>
<div class="abs" style="left:340.5px;top:361.9px;width:649.5px;height:25px;background:#dadada"></div>
<div class="t" style="left:343.6px;top:360.5px;font-size:10px;color:#fff;letter-spacing:0.2px">…</div>
<div class="ln" style="left:353.00px;top:20.70px"><span class="dc">&lt;!DOCTYPE html&gt;</span></div>
<div class="ln" style="left:353.00px;top:34.17px"><span class="p">&lt;</span><span class="tg">html</span> <span class="an">hola_ext_inject</span><span class="p">="</span><span class="av">disabled</span><span class="p">"</span><span class="p">&gt;</span></div>
<div class="ln" style="left:363.72px;top:47.64px">#shadow-root (open)</div>
<div class="ln" style="left:363.72px;top:61.11px"><span class="p">&lt;</span><span class="tg">head</span><span class="p">&gt;</span>…<span class="p">&lt;/</span><span class="tg">head</span><span class="p">&gt;</span></div>
<div class="ln" style="left:363.72px;top:74.58px"><span class="p">&lt;</span><span class="tg">body</span> <span class="an">ng-app</span><span class="p">="</span><span class="av">starter</span><span class="p">"</span> <span class="an">class</span><span class="p">="</span><span class="av">grade-a platform-browser platform-android platform-android4 platform-</span></div>
<div class="ln" style="left:353.00px;top:87.09px"><span class="av">android4_4 platform-ready popup-open</span><span class="p">"</span> <span class="an">cz-shortcut-listen</span><span class="p">="</span><span class="av">true</span><span class="p">"</span><span class="p">&gt;</span></div>
<div class="ln" style="left:374.44px;top:100.56px"><span class="p">&lt;</span><span class="tg">ion-nav-view</span> <span class="an">class</span><span class="p">="</span><span class="av">view-container</span><span class="p">"</span> <span class="an">nav-view-transition</span><span class="p">="</span><span class="av">android</span><span class="p">"</span> <span class="an">nav-view-direction</span><span class="p">="</span><span class="av">none</span><span class="p">"</span> <span class="an">nav-swipe</span><span class="p">&gt;</span></div>
<div class="ln" style="left:385.16px;top:114.03px"><span class="p">&lt;</span><span class="tg">ion-side-menus</span> <span class="an">enable-menu-with-back-views</span><span class="p">="</span><span class="av">false</span><span class="p">"</span> <span class="an">class</span><span class="p">="</span><span class="av">pane view</span><span class="p">"</span> <span class="an">nav-view</span><span class="p">="</span><span class="av">active</span><span class="p">"</span> <span class="an">style</span><span class="p">=</span></div>
<div class="ln" style="left:374.44px;top:126.54px"><span class="p">"</span><span class="av">transform: translate3d(0%, 0px, 0px);</span><span class="p">"&gt;</span></div>
<div class="ln" style="left:395.88px;top:140.01px"><span class="p">&lt;</span><span class="tg">ion-side-menu-content</span> <span class="an">class</span><span class="p">="</span><span class="av">menu-content pane menu-animated</span><span class="p">"</span> <span class="an">style</span><span class="p">="</span><span class="av">transform: translate3d(0px,</span></div>
<div class="ln" style="left:385.16px;top:152.52px"><span class="av">0px, 0px);</span><span class="p">"&gt;</span>…<span class="p">&lt;/</span><span class="tg">ion-side-menu-content</span><span class="p">&gt;</span></div>
<div class="ln" style="left:395.88px;top:165.99px"><span class="p">&lt;</span><span class="tg">ion-side-menu</span> <span class="an">side</span><span class="p">="</span><span class="av">left</span><span class="p">"</span> <span class="an">is-enabled</span><span class="p">="</span><span class="av">true</span><span class="p">"</span> <span class="an">width</span><span class="p">="</span><span class="av">275</span><span class="p">"</span> <span class="an">class</span><span class="p">="</span><span class="av">menu menu-left</span><span class="p">"</span> <span class="an">style</span><span class="p">="</span><span class="av">width: 275px;</span></div>
<div class="ln" style="left:385.16px;top:178.50px"><span class="av">z-index: 0;</span><span class="p">"&gt;</span></div>
<div class="ln" style="left:406.60px;top:191.97px"><span class="p">&lt;</span><span class="tg">ion-header-bar</span> <span class="an">class</span><span class="p">="</span><span class="av">bar-stable bar bar-header disable-user-behavior</span><span class="p">"</span><span class="p">&gt;</span>…<span class="p">&lt;/</span><span class="tg">ion-header-bar</span><span class="p">&gt;</span></div>
<div class="ln" style="left:406.60px;top:205.44px"><span class="p">&lt;</span><span class="tg">ion-content</span> <span class="an">class</span><span class="p">="</span><span class="av">scroll-content ionic-scroll  has-header</span><span class="p">"</span><span class="p">&gt;</span></div>
<div class="ln" style="left:417.32px;top:218.91px"><span class="p">&lt;</span><span class="tg">div</span> <span class="an">class</span><span class="p">="</span><span class="av">scroll</span><span class="p">"</span> <span class="an">style</span><span class="p">="</span><span class="av">transform: translate3d(0px, 0px, 0px) scale(1);</span><span class="p">"</span><span class="p">&gt;</span></div>
<div class="ln" style="left:428.04px;top:232.38px"><span class="p">&lt;</span><span class="tg">ion-list</span> <span class="an">class</span><span class="p">="</span><span class="av">disable-user-behavior</span><span class="p">"</span><span class="p">&gt;</span></div>
<div class="ln" style="left:438.76px;top:245.85px"><span class="p">&lt;</span><span class="tg">div</span> <span class="an">class</span><span class="p">="</span><span class="av">list</span><span class="p">"</span><span class="p">&gt;</span></div>
<div class="ln" style="left:449.48px;top:259.32px"><span class="cm">&lt;!-- &lt;ion-item menu-close ng-click="login()"&gt;</span></div>
<div class="ln" style="left:449.48px;top:271.83px"><span class="cm">          Login</span></div>
<div class="ln" style="left:449.48px;top:284.34px"><span class="cm">        &lt;/ion-item&gt; --&gt;</span></div>
<div class="ln" style="left:449.48px;top:297.81px"><span class="cm">&lt;!-- This is currentUser {{currentUser}} --&gt;</span></div>
<div class="ln" style="left:449.48px;top:311.28px"><span class="p">&lt;</span><span class="tg">ion-item</span> <span class="an">class</span><span class="p">="</span><span class="av">item-icon-left item item-complex ng-hide</span><span class="p">"</span> <span class="an">nav-clear</span> <span class="an">menu-close</span> <span class="an">ui-sref</span><span class="p">=</span></div>
<div class="ln" style="left:438.76px;top:323.79px"><span class="p">"</span><span class="av">app.auth</span><span class="p">"</span> <span class="an">ng-show</span><span class="p">="</span><span class="av">!currentUser</span><span class="p">"</span> <span class="an">href</span><span class="p">="</span><span class="av" style="text-decoration:underline;color:#2233c4">#/app/auth</span><span class="p">"&gt;</span></div>
<div class="ln" style="left:460.20px;top:337.26px"><span class="p">&lt;</span><span class="tg">a</span> <span class="an">class</span><span class="p">="</span><span class="av">item-content</span><span class="p">"</span><span class="p">&gt;</span>…<span class="p">&lt;/</span><span class="tg">a</span><span class="p">&gt;</span></div>
<div class="ln" style="left:449.48px;top:350.73px"><span class="p">&lt;/</span><span class="tg">ion-item</span><span class="p">&gt;</span></div>
<div class="ln" style="left:449.48px;top:364.20px"><span class="p">&lt;</span><span class="tg">ion-item</span> <span class="an">class</span><span class="p">="</span><span class="av">item-icon-left item item-complex</span><span class="p">"</span> <span class="an">nav-clear</span> <span class="an">menu-close</span> <span class="an">ui-sref</span><span class="p">="</span><span class="av">app.jokes</span><span class="p">"</span></div>
<div class="ln" style="left:438.76px;top:376.71px"><span class="an">href</span><span class="p">="</span><span class="av" style="text-decoration:underline;color:#2233c4">#/app/jokes</span><span class="p">"&gt;</span></div>
<div class="ln" style="left:460.20px;top:390.18px"><span class="p">&lt;</span><span class="tg">a</span> <span class="an">class</span><span class="p">="</span><span class="av">item-content</span><span class="p">"</span><span class="p">&gt;</span>…<span class="p">&lt;/</span><span class="tg">a</span><span class="p">&gt;</span></div>
<div class="ln" style="left:449.48px;top:403.65px"><span class="p">&lt;/</span><span class="tg">ion-item</span><span class="p">&gt;</span></div>
<div class="ln" style="left:449.48px;top:417.12px"><span class="cm">&lt;!-- &lt;ion-item menu-close href="#/app/search"&gt;</span></div>
<div class="ln" style="left:449.48px;top:429.63px"><span class="cm">          Search</span></div>
<div class="ln" style="left:449.48px;top:442.14px"><span class="cm">        &lt;/ion-item&gt;</span></div>
<div class="ln" style="left:449.48px;top:454.65px"><span class="cm">        &lt;ion-item menu-close href="#/app/browse"&gt;</span></div>
<div class="ln" style="left:449.48px;top:467.16px"><span class="cm">          Browse</span></div>
<div class="ln" style="left:449.48px;top:479.67px"><span class="cm">        &lt;/ion-item&gt;</span></div>
<svg class="abs" style="left:0;top:0" width="1024" height="521" fill="#5a5a5a"><path d="M353.90 48.24 L359.80 51.64 L353.90 55.04 Z"/><path d="M353.90 61.71 L359.80 65.11 L353.90 68.51 Z"/><path d="M353.55 76.28 L360.75 76.28 L357.15 82.08 Z"/><path d="M364.27 102.26 L371.47 102.26 L367.87 108.06 Z"/><path d="M374.99 115.73 L382.19 115.73 L378.59 121.53 Z"/><path d="M386.06 140.61 L391.96 144.01 L386.06 147.41 Z"/><path d="M385.71 167.69 L392.91 167.69 L389.31 173.49 Z"/><path d="M396.78 192.57 L402.68 195.97 L396.78 199.37 Z"/><path d="M396.43 207.14 L403.63 207.14 L400.03 212.94 Z"/><path d="M407.15 220.61 L414.35 220.61 L410.75 226.41 Z"/><path d="M417.87 234.08 L425.07 234.08 L421.47 239.88 Z"/><path d="M428.59 247.55 L435.79 247.55 L432.19 253.35 Z"/><path d="M439.31 312.98 L446.51 312.98 L442.91 318.78 Z"/><path d="M450.38 337.86 L456.28 341.26 L450.38 344.66 Z"/><path d="M439.31 365.90 L446.51 365.90 L442.91 371.70 Z"/><path d="M450.38 390.78 L456.28 394.18 L450.38 397.58 Z"/></svg>
<div class="abs" style="left:990px;top:16.2px;width:15px;height:475px;background:#f1f1f1"></div>
<div class="abs" style="left:992.2px;top:31.4px;width:10.8px;height:284.6px;background:#bcbcbc"></div>
<svg class="abs" style="left:990px;top:16px" width="15" height="476"><path d="M4.1 10.4 L10.9 10.4 L7.5 6.4 Z" fill="#a3a3a3"/><path d="M4.1 465 L10.9 465 L7.5 469 Z" fill="#505050"/></svg>
<div class="abs" style="left:340.5px;top:491.2px;width:665px;height:17.3px;background:#fff;border-top:1px solid #d0d0d0"></div>
<div class="bc" style="left:346.3px;top:492.8px;transform-origin:0 0;transform:scaleX(0.9064);">html</div>
<div class="bc" style="left:378.8px;top:492.8px;transform-origin:0 0;transform:scaleX(0.8902);">body</div>
<div class="bc" style="left:413.8px;top:492.8px;transform-origin:0 0;transform:scaleX(0.8705);">ion-nav-view</div>
<div class="bc" style="left:482.8px;top:492.8px;transform-origin:0 0;transform:scaleX(0.8598);">ion-side-menus</div>
<div class="bc" style="left:563.7px;top:492.8px;transform-origin:0 0;transform:scaleX(0.8686);">ion-side-menu</div>
<div class="bc" style="left:640px;top:492.8px;transform-origin:0 0;transform:scaleX(0.9015);">ion-content</div>
<div class="bc" style="left:703.5px;top:492.8px;transform-origin:0 0;transform:scaleX(0.9182);">div</div>
<div class="bc" style="left:729.4px;top:492.8px;transform-origin:0 0;transform:scaleX(0.8906);">ion-list</div>
<div class="bc" style="left:771.7px;top:492.8px;transform-origin:0 0;transform:scaleX(0.8910);">div</div>
<div class="abs" style="left:790.8px;top:492px;width:195.2px;height:16.4px;background:#3879d9"></div>
<div class="bc" style="left:797.6px;top:492.8px;transform-origin:0 0;transform:scaleX(0.8836);color:#fff;">ion-item.item-icon-left.item.item-complex</div>
<div class="abs" style="left:340.5px;top:508.4px;width:683.5px;height:13px;background:#f0f0f0;border-top:1px solid #c6c6c6"></div>
<div class="abs" style="left:345px;top:511px;width:46.6px;height:12px;background:#fff;border:1px solid #c8c8c8"></div>
<div class="t" style="left:349.4px;top:517.8px;transform-origin:0 0;transform:scaleX(0.8698);font-size:12px;color:#333;">Console</div>
<div class="t" style="left:396.8px;top:517.8px;transform-origin:0 0;transform:scaleX(0.9274);font-size:12px;color:#5a5a5a;">Emulation</div>
<div class="t" style="left:454.6px;top:517.8px;transform-origin:0 0;transform:scaleX(0.8813);font-size:12px;color:#5a5a5a;">Rendering</div>
<div class="abs" style="left:1005px;top:16.2px;width:1px;height:492.3px;background:#b4b4b4"></div>
<div class="abs" style="left:1006px;top:16.2px;width:18px;height:23.3px;background:#f3f3f3;border-bottom:1px solid #ccc"></div>
<div class="abs" style="left:1010.6px;top:18.5px;width:20px;height:21.6px;background:#fff;border:1px solid #ccc;border-bottom:none"></div>
<div class="t" style="left:1015px;top:24.8px;font-size:11.4px;color:#333">St</div>
<div class="t" style="left:1010px;top:47.2px;font-size:11.4px;color:#b0b0b0">Filt</div>
<div class="abs" style="left:1006px;top:63.30px;width:18px;height:1px;background:#dedede"></div>
<div class="abs" style="left:1006px;top:96.50px;width:18px;height:1px;background:#dedede"></div>
<div class="abs" style="left:1006px;top:154.70px;width:18px;height:1px;background:#dedede"></div>
<div class="abs" style="left:1006px;top:213.25px;width:18px;height:1px;background:#dedede"></div>
<div class="abs" style="left:1006px;top:283.50px;width:18px;height:1px;background:#dedede"></div>
<div class="abs" style="left:1006px;top:442.50px;width:18px;height:1px;background:#dedede"></div>
<div class="st" style="top:68.20px;color:#888">ele</div>
<div class="st" style="top:82.80px;color:#333">}</div>
<div class="st" style="top:101.70px;color:#222">.it</div>
<div class="st" style="top:113.80px;color:#222">cor</div>
<div class="st" style="top:140.80px;color:#333">}</div>
<div class="st" style="top:159.50px;color:#222">.it</div>
<div class="st" style="top:172.00px;color:#222">let</div>
<div class="st" style="top:198.60px;color:#333">}</div>
<div class="st" style="top:218.00px;color:#222">.it</div>
<div class="st" style="top:229.80px;color:#222">cor</div>
<div class="st" style="top:241.60px;color:#888">but</div>
<div class="st" style="top:269.70px;color:#333">}</div>
<div class="st" style="top:288.75px;color:#222">.it</div>
<div class="st" style="top:301.00px;color:#888">h1,</div>
<div class="st" style="top:312.70px;color:#888">h4,</div>
<div class="st" style="top:326.70px;color:#888">.it</div>
<div class="st" style="top:338.75px;color:#888">.it</div>
<div class="st" style="top:350.60px;color:#888">h3,</div>
<div class="st" style="top:363.75px;color:#888">cor</div>
<div class="st" style="top:376.70px;color:#888">.it</div>
<div class="st" style="top:428.60px;color:#333">}</div>
<div class="st" style="top:448.00px;color:#222">.it</div>
</body></html>
